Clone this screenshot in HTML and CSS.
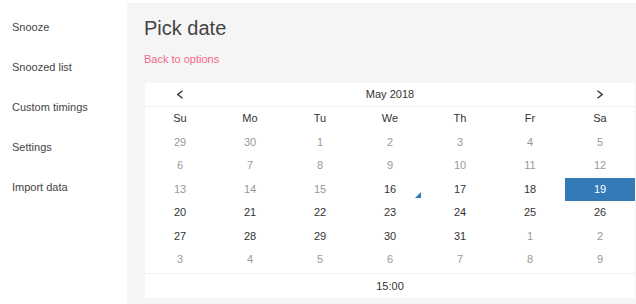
FILE: index.html
```html
<!DOCTYPE html>
<html>
    <head>
        <meta http-equiv="Content-Type" content="text/html; charset=utf-8" />
        <title>Pick date</title>
        <link rel="stylesheet" href="styles.css">
    </head>
    <body>
        <div class="page">
            <ul class="menu">
                <li>Snooze</li>
                <li>Snoozed list</li>
                <li>Custom timings</li>
                <li>Settings</li>
                <li>Import data</li>
            </ul>
            <div class="panel">
                <h1>Pick date</h1>
                <a class="back" href="#">Back to options</a>
                <div class="picker">
                    <div class="head">
                        <span class="nav"><svg width="8" height="9" viewBox="0 0 8 9"><path d="M6.5 0.8 L1.8 4.5 L6.5 8.2" fill="none" stroke="#333" stroke-width="1.4"/></svg></span>
                        <span class="month">May 2018</span>
                        <span class="nav"><svg width="8" height="9" viewBox="0 0 8 9"><path d="M1.5 0.8 L6.2 4.5 L1.5 8.2" fill="none" stroke="#333" stroke-width="1.4"/></svg></span>
                    </div>
                    <div class="days">
                        <span class="dow">Su</span><span class="dow">Mo</span><span class="dow">Tu</span><span class="dow">We</span><span class="dow">Th</span><span class="dow">Fr</span><span class="dow">Sa</span>

                        <span class="day off">29</span><span class="day off">30</span><span class="day off">1</span><span class="day off">2</span><span class="day off">3</span><span class="day off">4</span><span class="day off">5</span>
                        <span class="day off">6</span><span class="day off">7</span><span class="day off">8</span><span class="day off">9</span><span class="day off">10</span><span class="day off">11</span><span class="day off">12</span>
                        <span class="day off">13</span><span class="day off">14</span><span class="day off">15</span><span class="day today">16</span><span class="day">17</span><span class="day">18</span><span class="day active">19</span>
                        <span class="day">20</span><span class="day">21</span><span class="day">22</span><span class="day">23</span><span class="day">24</span><span class="day">25</span><span class="day">26</span>
                        <span class="day">27</span><span class="day">28</span><span class="day">29</span><span class="day">30</span><span class="day">31</span><span class="day off">1</span><span class="day off">2</span>
                        <span class="day off">3</span><span class="day off">4</span><span class="day off">5</span><span class="day off">6</span><span class="day off">7</span><span class="day off">8</span><span class="day off">9</span>
                    </div>
                    <div class="time">15:00</div>
                </div>
            </div>
        </div>
    </body>
</html>
```

FILE: styles.css
```css
body {
    margin:         0px;
    font-size:      11px;
    font-family:    "Liberation Sans", Arial, sans-serif;
    color:          #333333;
    background:     #FFFFFF;
}
.page {
    display:        flex;
    height:         304px;
    overflow:       hidden;
}
ul.menu {
    list-style:     none;
    margin:         0px;
    padding:        7px 0px 0px 12px;
    width:          115px;
    flex-shrink:    0;
}
ul.menu li {
    height:         40px;
    line-height:    40px;
    color:          #444444;
}
.panel {
    flex:           1;
    margin-top:     3px;
    background:     #F5F5F5;
    padding:        13px 0px 0px 17px;
}
.panel h1 {
    margin:         0px;
    font-size:      20px;
    font-weight:    normal;
    line-height:    24px;
    color:          #444444;
}
a.back {
    display:        block;
    margin-top:     11px;
    line-height:    16px;
    color:          #F46A8C;
    text-decoration: none;
}
.picker {
    margin:         16px 0px 0px 1px;
    width:          490px;
    background:     #FFFFFF;
}
.picker .head {
    display:        grid;
    grid-template-columns: 70px 1fr 70px;
    height:         23px;
    line-height:    23px;
    text-align:     center;
    border-bottom:  1px solid #F0F0F0;
}
.picker .nav {
    display:        flex;
    align-items:    center;
    justify-content: center;
}
.picker .days {
    display:        grid;
    grid-template-columns: repeat(7, 70px);
    grid-auto-rows: 23.5px;
    text-align:     center;
    border-bottom:  1px solid #F0F0F0;
    padding-bottom: 1px;
}
.picker .days span {
    position:       relative;
    line-height:    23.5px;
}
.picker .day.off {
    color:          #999999;
}
.picker .day.active {
    background:     #337AB7;
    color:          #FFFFFF;
}
.picker .day.today:before {
    content:        '';
    position:       absolute;
    right:          4px;
    bottom:         3px;
    border:         solid transparent;
    border-width:   0px 0px 6px 6px;
    border-bottom-color: #337AB7;
}
.picker .time {
    height:         24px;
    line-height:    24px;
    text-align:     center;
}
```
